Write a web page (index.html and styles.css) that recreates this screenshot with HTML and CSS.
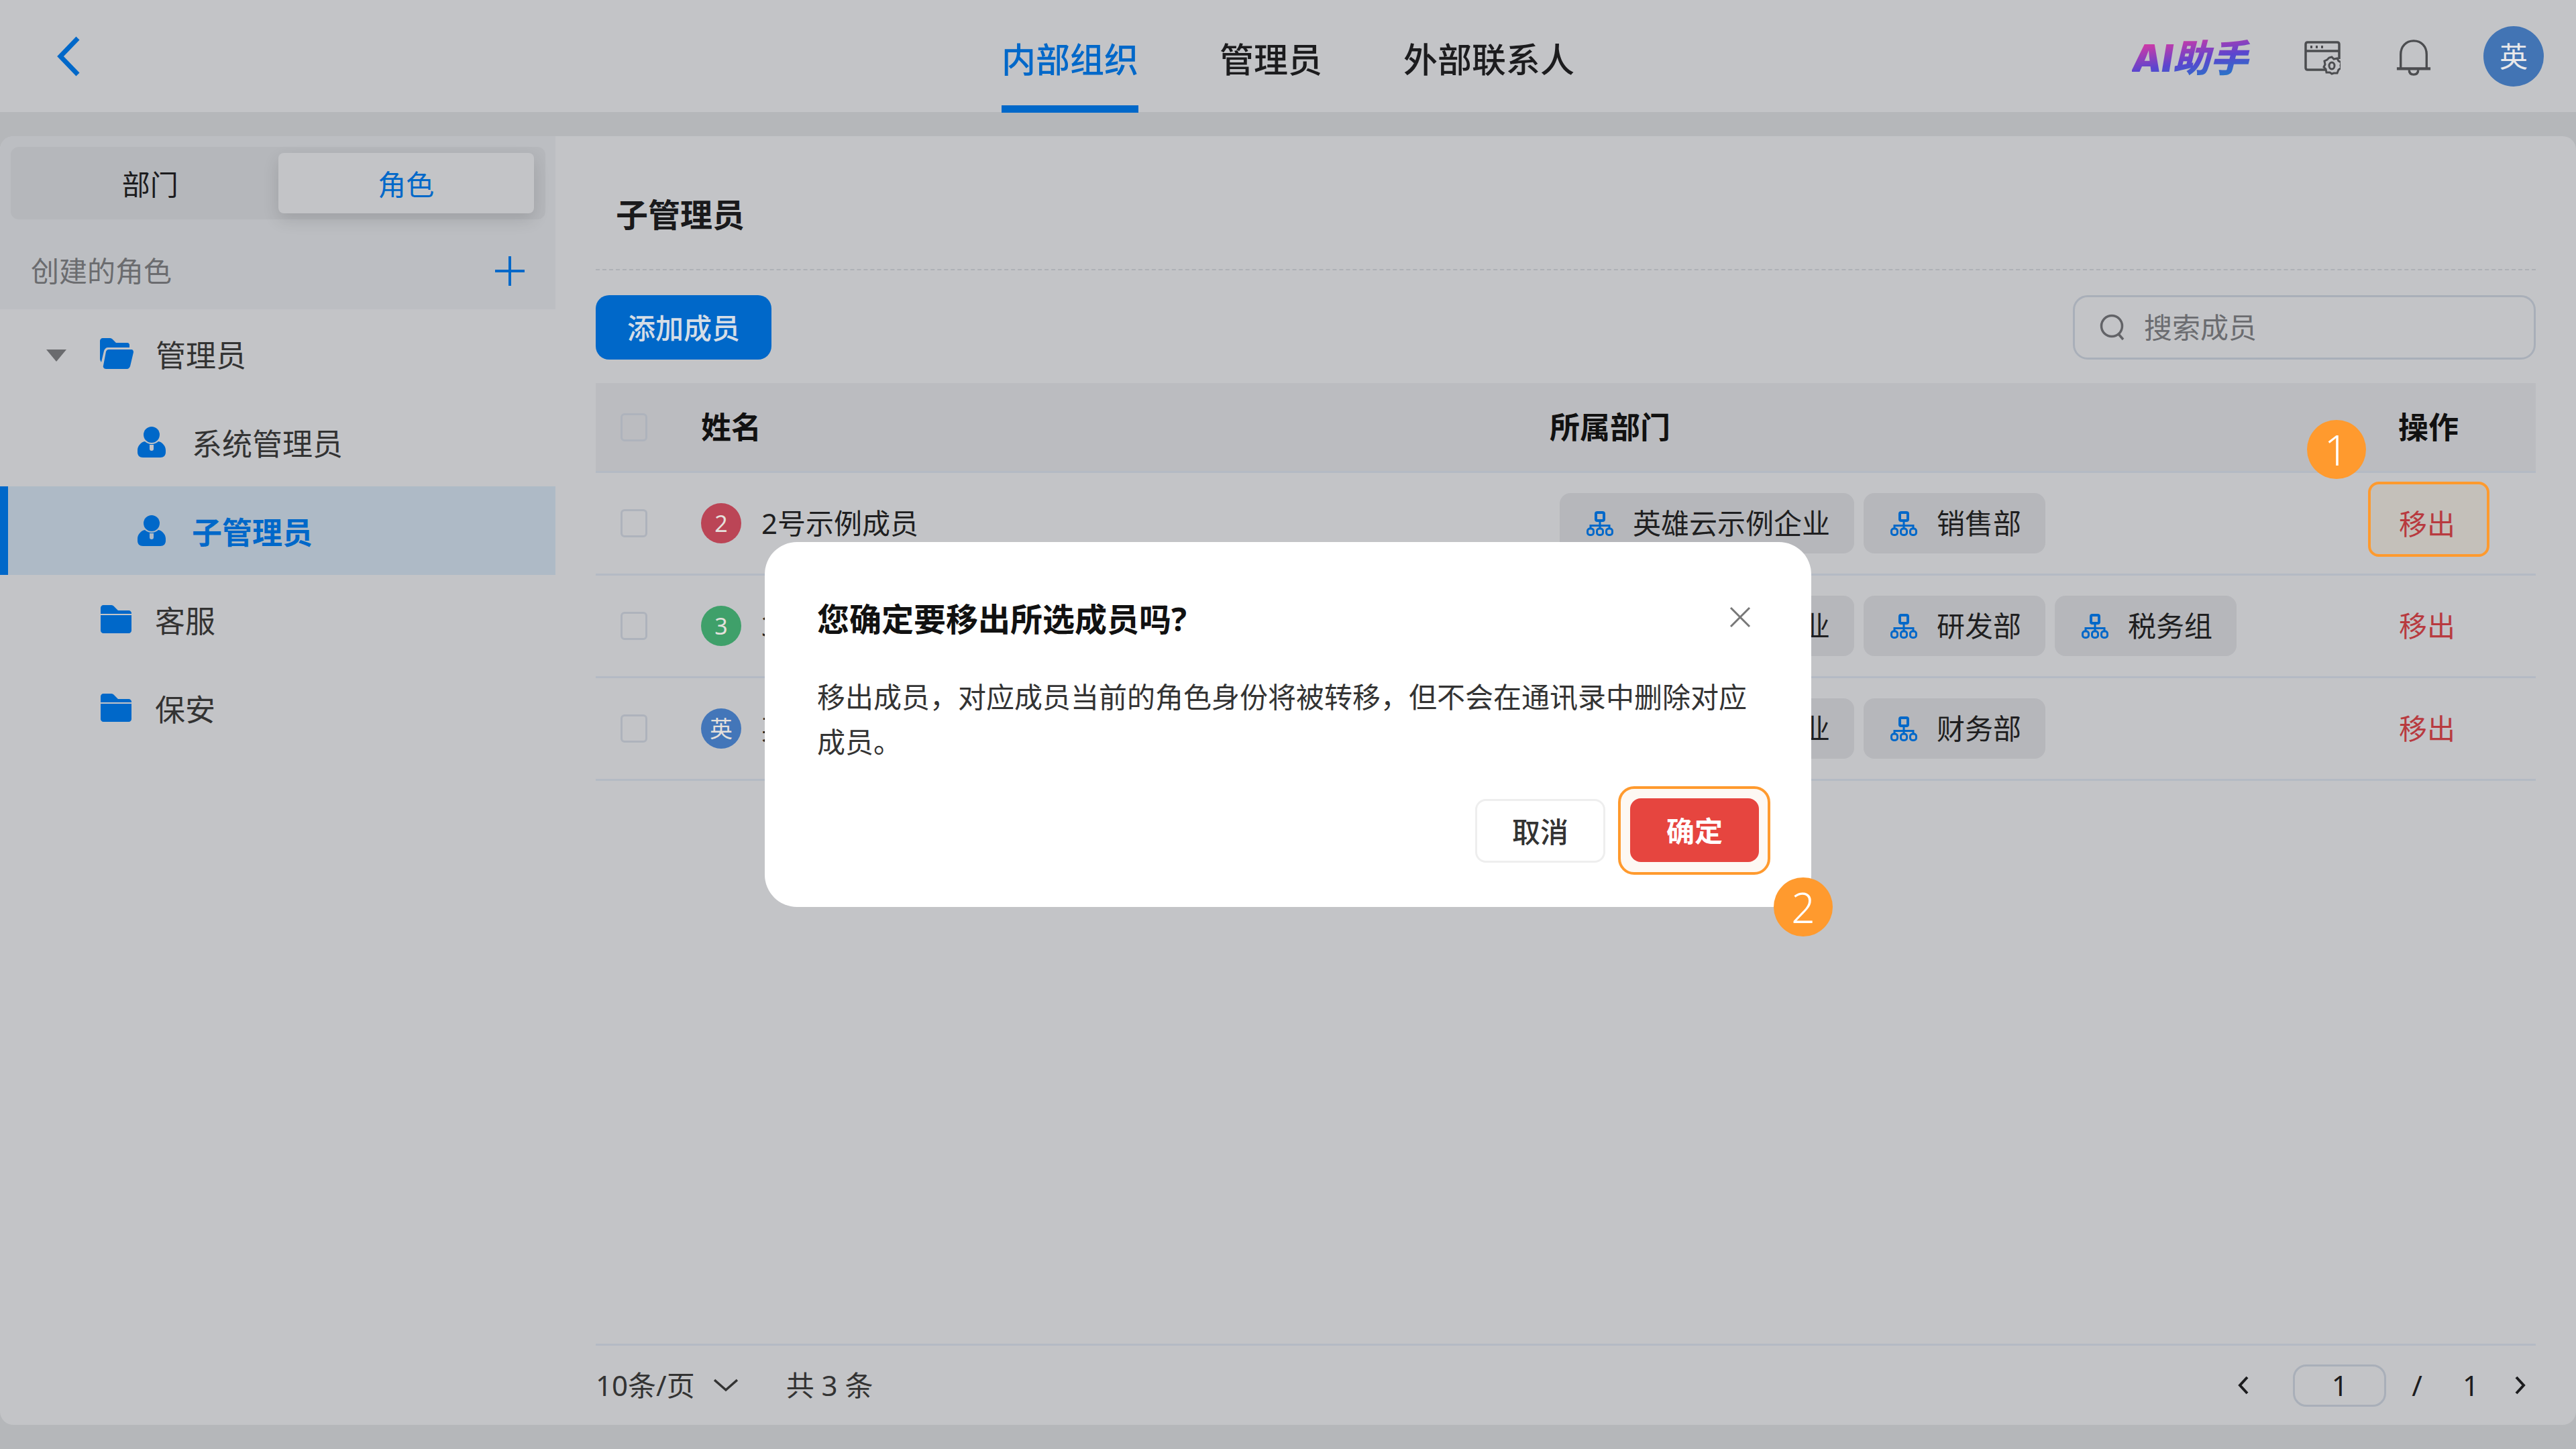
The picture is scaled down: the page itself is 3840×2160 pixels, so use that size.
FILE: index.html
```html
<!DOCTYPE html>
<html lang="zh-CN">
<head>
  <meta charset="UTF-8" />
  <meta name="viewport" content="width=device-width, initial-scale=1.0"/>
  <title>子管理员</title>
  <link rel="stylesheet" href="styles.css">
</head>
<body>
  <svg class="sprites" width="0" height="0">
    <symbol id="i-org" viewBox="0 0 40 37">
      <g fill="none" stroke="currentColor" stroke-width="3">
        <rect x="14" y="2" width="12" height="12" rx="2" stroke-width="4"/>
        <path d="M20 14v12M6 26v-4.500h28v4.500"/>
        <rect x="1.500" y="26" width="9" height="9.500" rx="3.500"/>
        <rect x="15.500" y="26" width="9" height="9.500" rx="3.500"/>
        <rect x="29.500" y="26" width="9" height="9.500" rx="3.500"/>
      </g>
    </symbol>
    <symbol id="i-folder" viewBox="0 0 46 42">
      <path fill="currentColor" d="M4 0h12c2 0 3 1 4 2l6 6h16c2 0 4 2 4 4v1H0V4C0 2 2 0 4 0z"/>
      <path fill="currentColor" d="M0 15h46v23c0 2-2 4-4 4H4c-2 0-4-2-4-4z"/>
    </symbol>
    <symbol id="i-folder-open" viewBox="0 0 50 46">
      <path fill="currentColor" d="M4 0h11c2 0 3 1 4 2l5 5h17c2 0 3 2 3 3v4H12c-3 0-5 2-6 5L2 36C1 34 0 33 0 31V4c0-2 2-4 4-4z"/>
      <path fill="currentColor" d="M13 17h34c2 0 3 2 3 4l-5 21c-1 2-2 4-5 4H9c-3 0-5-3-4-5l4-21c1-2 2-3 4-3z"/>
    </symbol>
    <symbol id="i-person" viewBox="0 0 42 46">
      <circle fill="currentColor" cx="21" cy="12" r="12"/>
      <path fill="currentColor" fill-rule="evenodd" d="M11 22c-6 1-11 7-11 13v3c0 5 3 8 8 8h26c5 0 8-3 8-8v-3c0-6-5-12-11-13-2 2-6 4-10 4s-8-2-10-4zM18 27h6v6c0 2-1 3-3 3s-3-1-3-3z"/>
    </symbol>
  </svg>

  <header class="topbar">
    <div class="topbar-left">
      <svg class="back-icon" viewBox="0 0 34 60"><path d="M31 3L5 30l26 27" fill="none" stroke="currentColor" stroke-width="7"/></svg>
    </div>
    <nav class="nav-tabs">
      <a class="nav-tab active">内部组织</a>
      <a class="nav-tab">管理员</a>
      <a class="nav-tab">外部联系人</a>
    </nav>
    <div class="topbar-right">
      <span class="ai-logo">AI助手</span>
      <svg class="top-icon" viewBox="0 0 54 50" fill="none" stroke="#4c4d50" stroke-width="3.500">
        <path d="M36 43H5c-2 0-3-1-3-3V5c0-2 1-3 3-3h44c2 0 3 1 3 3v22M2 15h50"/>
        <path d="M9 9h3M17 9h3M25 9h3" stroke-width="4"/>
        <path d="M41 24l3 3 5-1 2 4 4 2-1 5 1 3-4 3-2 5h-5l-3 1-3-2-5 0-1-5-3-3 2-4-1-5 4-2 3-3z" fill="#c3c4c7" stroke-width="3"/>
        <ellipse cx="41" cy="37" rx="4" ry="5" stroke-width="3"/>
      </svg>
      <svg class="top-icon" viewBox="0 0 54 56" fill="none" stroke="#4c4d50" stroke-width="3.500">
        <path d="M7 44V23C7 11 15 2 27 2s20 9 20 21v21"/>
        <path d="M1 45h52" stroke-width="4.500"/>
        <path d="M20 47c0 5 3 7 7 7s7-2 7-7" />
      </svg>
      <span class="user-avatar">英</span>
    </div>
  </header>

  <main class="panel">
    <aside class="sidebar">
      <div class="sidebar-head">
        <div class="seg-tabs">
          <div class="seg-tab">部门</div>
          <div class="seg-tab active">角色</div>
        </div>
        <div class="role-head">
          <span>创建的角色</span>
          <svg class="plus-icon" viewBox="0 0 44 44"><path d="M22 0v44M0 22h44" stroke="currentColor" stroke-width="4"/></svg>
        </div>
      </div>
      <div class="tree-row group">
        <span class="caret"></span>
        <svg class="folder-open"><use href="#i-folder-open"/></svg>
        <span>管理员</span>
      </div>
      <div class="tree-row role">
        <svg class="person"><use href="#i-person"/></svg>
        <span>系统管理员</span>
      </div>
      <div class="tree-row role active">
        <svg class="person"><use href="#i-person"/></svg>
        <span>子管理员</span>
      </div>
      <div class="tree-row group plain">
        <svg class="folder"><use href="#i-folder"/></svg>
        <span>客服</span>
      </div>
      <div class="tree-row group plain">
        <svg class="folder"><use href="#i-folder"/></svg>
        <span>保安</span>
      </div>
    </aside>

    <section class="content">
      <h2 class="page-title">子管理员</h2>
      <div class="toolbar">
        <button class="btn-primary">添加成员</button>
        <div class="search-box">
          <svg class="search-icon" viewBox="0 0 38 40" fill="none" stroke="#626367" stroke-width="3.500"><circle cx="18" cy="18" r="15.500"/><path d="M28 30l7 8"/></svg>
          <span>搜索成员</span>
        </div>
      </div>

      <div class="table">
        <div class="table-row table-head">
          <div><span class="check"></span></div>
          <div>姓名</div>
          <div>所属部门</div>
          <div class="op-cell">操作</div>
        </div>
        <div class="table-row">
          <div><span class="check"></span></div>
          <div class="name-cell"><span class="avatar red">2</span>2号示例成员</div>
          <div class="tags">
            <span class="tag"><svg class="org"><use href="#i-org"/></svg>英雄云示例企业</span>
            <span class="tag"><svg class="org"><use href="#i-org"/></svg>销售部</span>
          </div>
          <div class="op-cell">
            <a class="op-link marked">移出<span class="step step-one">1</span></a>
          </div>
        </div>
        <div class="table-row">
          <div><span class="check"></span></div>
          <div class="name-cell"><span class="avatar green">3</span>3号示例成员</div>
          <div class="tags">
            <span class="tag"><svg class="org"><use href="#i-org"/></svg>英雄云示例企业</span>
            <span class="tag"><svg class="org"><use href="#i-org"/></svg>研发部</span>
            <span class="tag"><svg class="org"><use href="#i-org"/></svg>税务组</span>
          </div>
          <div class="op-cell"><a class="op-link">移出</a></div>
        </div>
        <div class="table-row">
          <div><span class="check"></span></div>
          <div class="name-cell"><span class="avatar blue">英</span>英雄云示例成员</div>
          <div class="tags">
            <span class="tag"><svg class="org"><use href="#i-org"/></svg>英雄云示例企业</span>
            <span class="tag"><svg class="org"><use href="#i-org"/></svg>财务部</span>
          </div>
          <div class="op-cell"><a class="op-link">移出</a></div>
        </div>
      </div>

      <footer class="pager">
        <div class="pager-left">
          <span>10条/页</span>
          <svg class="pager-down" viewBox="0 0 36 20" fill="none" stroke="#333" stroke-width="3.500"><path d="M1 2l17 15L35 2"/></svg>
          <span class="total">共 3 条</span>
        </div>
        <div class="pager-right">
          <svg class="pager-arrow" viewBox="0 0 16 28" fill="none" stroke="#1c1c1e" stroke-width="4"><path d="M14 2L3 14l11 12"/></svg>
          <span class="page-input">1</span>
          <span class="page-slash">/</span>
          <span class="page-count">1</span>
          <svg class="pager-arrow" viewBox="0 0 16 28" fill="none" stroke="#1c1c1e" stroke-width="4"><path d="M2 2l11 12L2 26"/></svg>
        </div>
      </footer>
    </section>
  </main>

  <div class="dialog">
    <h3 class="dialog-title">您确定要移出所选成员吗?</h3>
    <svg class="dialog-close" viewBox="0 0 32 32" fill="none" stroke="#777" stroke-width="3"><path d="M2 2l28 28M30 2L2 30"/></svg>
    <p class="dialog-text">移出成员&#65292;对应成员当前的角色身份将被转移&#65292;但不会在通讯录中删除对应成员&#12290;</p>
    <div class="dialog-actions">
      <button class="btn-cancel">取消</button>
      <div class="confirm-mark">
        <button class="btn-confirm">确定</button>
        <span class="step step-two">2</span>
      </div>
    </div>
  </div>
</body>
</html>
```

FILE: styles.css
```css
* {
  box-sizing: border-box;
}

body {
  width: 3840px;
  height: 2160px;
  margin: 0;
  position: relative;
  overflow: hidden;
  display: flex;
  flex-direction: column;
  background: #b5b7ba;
  color: #2c2c2e;
  font-family: "Noto Sans", "Noto Sans CJK SC", sans-serif;
  font-size: 42px;
  line-height: 60px;
}

.sprites {
  position: absolute;
}

button {
  font: inherit;
  border: none;
  padding: 0;
}

/* top bar */
.topbar {
  height: 167px;
  display: grid;
  grid-template-columns: 1fr auto 1fr;
  background: #c3c4c7;
}

.topbar-left {
  padding-left: 85px;
  display: flex;
  align-items: center;
}

.back-icon {
  width: 34px;
  height: 60px;
  color: #0068c9;
}

.nav-tabs {
  display: flex;
  gap: 121px;
}

.nav-tab {
  height: 168px;
  padding-top: 18px;
  display: flex;
  align-items: center;
  font-size: 51px;
  font-weight: 500;
  color: #1c1c1e;
  border-bottom: 11px solid transparent;
}

.nav-tab.active {
  color: #0068c9;
  border-bottom-color: #0068c9;
}

.topbar-right {
  display: flex;
  justify-content: flex-end;
  align-items: center;
  padding-right: 48px;
}

.ai-logo {
  width: 180px;
  margin-top: 6px;
  margin-right: 77px;
  font-family: Inter, "Noto Sans CJK SC", sans-serif;
  font-size: 56px;
  line-height: 62px;
  font-weight: 900;
  font-style: italic;
  white-space: nowrap;
  background: linear-gradient(170deg, #cf3aa6 15%, #5a45cf 55%, #2a72c8 85%);
  -webkit-background-clip: text;
  background-clip: text;
  color: transparent;
}

.top-icon {
  width: 54px;
  height: 54px;
  margin-top: 4px;
  margin-right: 82px;
}

.top-icon + .top-icon {
  margin-right: 77px;
}

.user-avatar {
  width: 90px;
  height: 90px;
  border-radius: 50%;
  background: #4274b4;
  color: #e8e8ea;
  display: flex;
  align-items: center;
  justify-content: center;
}

/* main panel */
.panel {
  height: 1921px;
  margin-top: 36px;
  display: flex;
  background: #c3c4c7;
  border-radius: 20px;
  overflow: hidden;
}

.sidebar {
  width: 828px;
  flex-shrink: 0;
}

.sidebar-head {
  height: 258px;
  background: #bcbec2;
  padding-top: 16px;
}

.seg-tabs {
  width: 797px;
  height: 108px;
  margin-left: 16px;
  padding: 9px 17px;
  display: flex;
  background: #b5b7bb;
  border-radius: 12px;
}

.seg-tab {
  flex: 1;
  padding-top: 4px;
  display: flex;
  align-items: center;
  justify-content: center;
  color: #1c1c1e;
  border-radius: 8px;
}

.seg-tab.active {
  background: #c3c4c7;
  color: #0068c9;
  box-shadow: 0 10px 24px rgba(0,0,0,0.12);
}

.role-head {
  height: 134px;
  padding: 20px 46px 0;
  display: flex;
  align-items: center;
  justify-content: space-between;
  color: #6b6c6f;
}

.plus-icon {
  width: 44px;
  height: 44px;
  color: #0068c9;
}

.tree-row {
  height: 132px;
  padding-top: 6px;
  display: flex;
  align-items: center;
  font-size: 45px;
  color: #333;
}

.tree-row.group {
  padding-left: 69px;
}

.tree-row.plain {
  padding-left: 150px;
}

.tree-row.role {
  padding-left: 205px;
}

.tree-row.active {
  background: #aebac6;
  box-shadow: inset 12px 0 0 #0068c9;
  color: #0068c9;
  font-weight: 700;
}

.caret {
  width: 0;
  height: 0;
  margin-right: 50px;
  border-left: 15px solid transparent;
  border-right: 15px solid transparent;
  border-top: 18px solid #6a6b6e;
}

.folder-open {
  width: 50px;
  height: 46px;
  margin-right: 33px;
  margin-top: -6px;
  color: #0068c9;
}

.folder {
  width: 46px;
  height: 42px;
  margin-right: 35px;
  margin-top: -6px;
  color: #0068c9;
}

.person {
  width: 42px;
  height: 46px;
  margin-right: 39px;
  margin-top: -6px;
  color: #0068c9;
}

/* content */
.content {
  flex: 1;
  padding: 0 60px;
  display: flex;
  flex-direction: column;
}

.page-title {
  height: 200px;
  margin: 0;
  padding: 87px 0 0 30px;
  font-size: 48px;
  font-weight: 700;
  line-height: 60px;
  color: #1a1a1c;
  border-bottom: 2px dashed #aeb1b6;
}

.toolbar {
  height: 96px;
  margin-top: 37px;
  display: flex;
  justify-content: space-between;
}

.btn-primary {
  width: 262px;
  padding-top: 2px;
  background: #0068c9;
  color: #d5dde6;
  border-radius: 20px;
  font-weight: 500;
}

.search-box {
  width: 690px;
  padding-left: 37px;
  display: flex;
  align-items: center;
  gap: 28px;
  border: 3px solid #a9afb9;
  border-radius: 22px;
  color: #6b6c70;
}

.search-icon {
  width: 38px;
  height: 40px;
}

.table {
  margin-top: 35px;
}

.table-row {
  height: 153px;
  display: grid;
  grid-template-columns: 157px 1265px 1fr 320px;
  align-items: center;
  border-bottom: 3px solid #b4bac4;
  color: #1f1f21;
}

.table-head {
  height: 134px;
  background: #bbbcc0;
  font-size: 45px;
  font-weight: 700;
  color: #111;
}

.check {
  display: block;
  width: 40px;
  height: 42px;
  margin-left: 37px;
  border: 3px solid #aeb3bc;
  border-radius: 6px;
}

.name-cell {
  display: flex;
  align-items: center;
  gap: 30px;
  white-space: nowrap;
}

.avatar {
  width: 60px;
  height: 60px;
  border-radius: 50%;
  display: flex;
  align-items: center;
  justify-content: center;
  font-size: 34px;
  color: #e4e0dc;
}

.avatar.red {
  background: #bb4556;
}

.avatar.green {
  background: #3fa06a;
}

.avatar.blue {
  background: #4376b9;
}

.tags {
  margin-left: 15px;
  display: flex;
  gap: 14px;
}

.tag {
  height: 90px;
  padding: 0 36px 0 40px;
  display: flex;
  align-items: center;
  gap: 29px;
  background: #b6b7bb;
  border-radius: 16px;
  white-space: nowrap;
}

.org {
  width: 40px;
  height: 37px;
  color: #0068c9;
}

.op-cell {
  display: flex;
  justify-content: center;
}

.op-link {
  position: relative;
  width: 181px;
  height: 112px;
  padding-right: 4px;
  display: flex;
  align-items: center;
  justify-content: center;
  color: #b83a3f;
}

.op-link.marked {
  margin-top: -12px;
  padding-top: 14px;
  background: #c4c0ba;
  border: 4px solid #ff9a2e;
  border-radius: 16px;
}

/* numbered step markers */
.step {
  position: absolute;
  width: 88px;
  height: 88px;
  border-radius: 50%;
  background: #ff9a2e;
  color: #fff;
  font-family: "Noto Sans", sans-serif;
  font-size: 62px;
  font-weight: 300;
  display: flex;
  align-items: center;
  justify-content: center;
}

.step-one {
  left: -95px;
  top: -96px;
}

.step-two {
  left: 228px;
  top: 132px;
}

/* pager */
.pager {
  height: 121px;
  margin-top: auto;
  padding-right: 15px;
  display: flex;
  align-items: center;
  justify-content: space-between;
  border-top: 3px solid #b4bac4;
  color: #333;
}

.pager-left,
.pager-right {
  display: flex;
  align-items: center;
}

.pager-down {
  width: 36px;
  height: 20px;
  margin-left: 28px;
}

.total {
  margin-left: 72px;
}

.pager-arrow {
  width: 16px;
  height: 28px;
}

.page-input {
  width: 139px;
  height: 63px;
  margin-left: 66px;
  display: flex;
  align-items: center;
  justify-content: center;
  border: 3px solid #a9afb9;
  border-radius: 20px;
  color: #1c1c1e;
}

.page-slash {
  margin-left: 38px;
  color: #1c1c1e;
}

.page-count {
  margin-left: 60px;
  margin-right: 54px;
  color: #1c1c1e;
}

/* confirm dialog */
.dialog {
  position: absolute;
  left: 1140px;
  top: 808px;
  width: 1560px;
  height: 544px;
  padding: 85px 61px 0 78px;
  background: #fff;
  border-radius: 48px;
}

.dialog-title {
  margin: 0;
  font-size: 48px;
  font-weight: 700;
  line-height: 60px;
  color: #111;
}

.dialog-close {
  position: absolute;
  right: 90px;
  top: 96px;
  width: 32px;
  height: 32px;
}

.dialog-text {
  width: 1400px;
  margin: 52px 0 0;
  line-height: 67px;
  color: #333;
}

.dialog-actions {
  margin-top: 33px;
  display: flex;
  justify-content: flex-end;
  align-items: center;
  gap: 19px;
}

.btn-cancel {
  width: 194px;
  height: 95px;
  padding-top: 3px;
  background: #fff;
  border: 3px solid #eee;
  border-radius: 16px;
  color: #333;
  font-weight: 500;
}

.confirm-mark {
  position: relative;
  width: 227px;
  height: 132px;
  padding: 14px;
  background: #fdf8f3;
  border: 4px solid #ff9a2e;
  border-radius: 24px;
}

.btn-confirm {
  width: 192px;
  height: 95px;
  padding-top: 3px;
  display: block;
  background: #e6453f;
  border-radius: 16px;
  color: #fff;
  font-weight: 700;
}
```
